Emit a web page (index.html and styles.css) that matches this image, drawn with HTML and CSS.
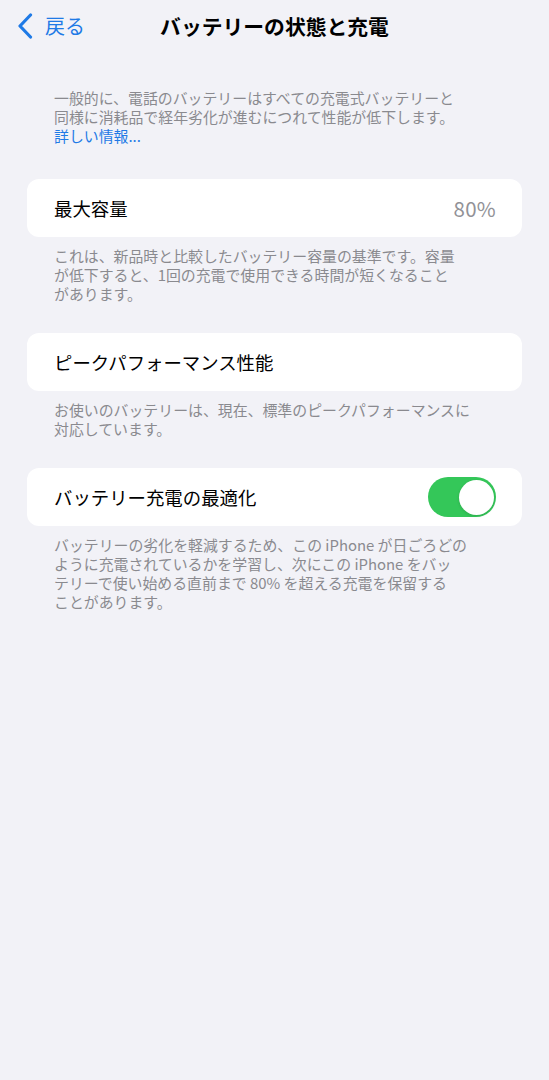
FILE: index.html
```html
<!DOCTYPE html>
<html lang="ja">
<head>
<meta charset="utf-8">
<title>バッテリーの状態と充電</title>
<link rel="stylesheet" href="styles.css">
</head>
<body>
<div class="screen">
  <header class="nav">
    <a class="back" href="#">
      <svg class="chev" width="16" height="26" viewBox="0 0 16 26" aria-hidden="true">
        <path d="M13.5 2 L3 13 L13.5 24" fill="none" stroke="#1f7ae6" stroke-width="3.2" stroke-linecap="round" stroke-linejoin="round"/>
      </svg>
      <span>戻る</span>
    </a>
    <h1 class="title">バッテリーの状態と充電</h1>
  </header>

  <p class="intro">一般的に、電話のバッテリーはすべての充電式バッテリーと<br>同様に消耗品で経年劣化が進むにつれて性能が低下します。<br><a class="link" href="#">詳しい情報...</a></p>

  <section class="group first">
    <div class="card">
      <span class="label">最大容量</span>
      <span class="value">80%</span>
    </div>
    <p class="foot">これは、新品時と比較したバッテリー容量の基準です。容量<br>が低下すると、1回の充電で使用できる時間が短くなること<br>があります。</p>
  </section>

  <section class="group">
    <div class="card">
      <span class="label">ピークパフォーマンス性能</span>
    </div>
    <p class="foot">お使いのバッテリーは、現在、標準のピークパフォーマンスに<br>対応しています。</p>
  </section>

  <section class="group">
    <div class="card">
      <span class="label">バッテリー充電の最適化</span>
      <span class="toggle on"><span class="knob"></span></span>
    </div>
    <p class="foot">バッテリーの劣化を軽減するため、この iPhone が日ごろどの<br>ように充電されているかを学習し、次にこの iPhone をバッ<br>テリーで使い始める直前まで 80% を超える充電を保留する<br>ことがあります。</p>
  </section>
</div>
</body>
</html>
```

FILE: styles.css
```css
html, body {
  margin: 0;
  padding: 0;
  background: #f2f2f7;
}

body {
  font-family: "Noto Sans CJK JP", "Noto Sans", sans-serif;
  color: #000;
  -webkit-font-smoothing: antialiased;
}

.screen {
  width: 549px;
  min-height: 1080px;
  box-sizing: border-box;
}

/* navigation bar */
.nav {
  position: relative;
  height: 52px;
  display: flex;
  align-items: center;
  justify-content: center;
}

.back {
  position: absolute;
  left: 17px;
  top: 13px;
  display: flex;
  align-items: center;
  gap: 12px;
  color: #1f7ae6;
  text-decoration: none;
  font-size: 20px;
  line-height: 26px;
}

.chev {
  display: block;
}

.title {
  margin: 0;
  font-size: 20.8px;
  font-weight: 700;
  line-height: 26px;
  letter-spacing: 0;
}

/* intro paragraph */
.intro {
  margin: 36px 0 0;
  padding: 0 54px;
  font-size: 14.9px;
  line-height: 19px;
  color: #8a8a8f;
  white-space: nowrap;
}

.link {
  color: #1f7ae6;
  text-decoration: none;
}

/* grouped rows */
.group {
  margin: 30px 27px 0;
}

.group.first {
  margin-top: 34px;
}

.card {
  height: 58px;
  background: #fff;
  border-radius: 12px;
  display: flex;
  align-items: center;
  justify-content: space-between;
  padding: 0 26px 0 27px;
}

.label {
  font-size: 18.4px;
  line-height: 24px;
  color: #000;
}

.value {
  font-size: 20.5px;
  line-height: 24px;
  color: #929297;
  letter-spacing: 0.3px;
}

.foot {
  margin: 0;
  padding: 9px 27px 0;
  font-size: 14.9px;
  line-height: 19px;
  color: #8a8a8f;
  white-space: nowrap;
}

/* switch */
.toggle {
  position: relative;
  width: 68px;
  height: 40px;
  border-radius: 20px;
  background: #e9e9eb;
  flex: none;
}

.toggle.on {
  background: #34c759;
}

.knob {
  position: absolute;
  top: 2.5px;
  right: 2.5px;
  width: 35px;
  height: 35px;
  border-radius: 50%;
  background: #fff;
  box-shadow: 0 1px 3px rgba(0, 0, 0, 0.14);
}
```
